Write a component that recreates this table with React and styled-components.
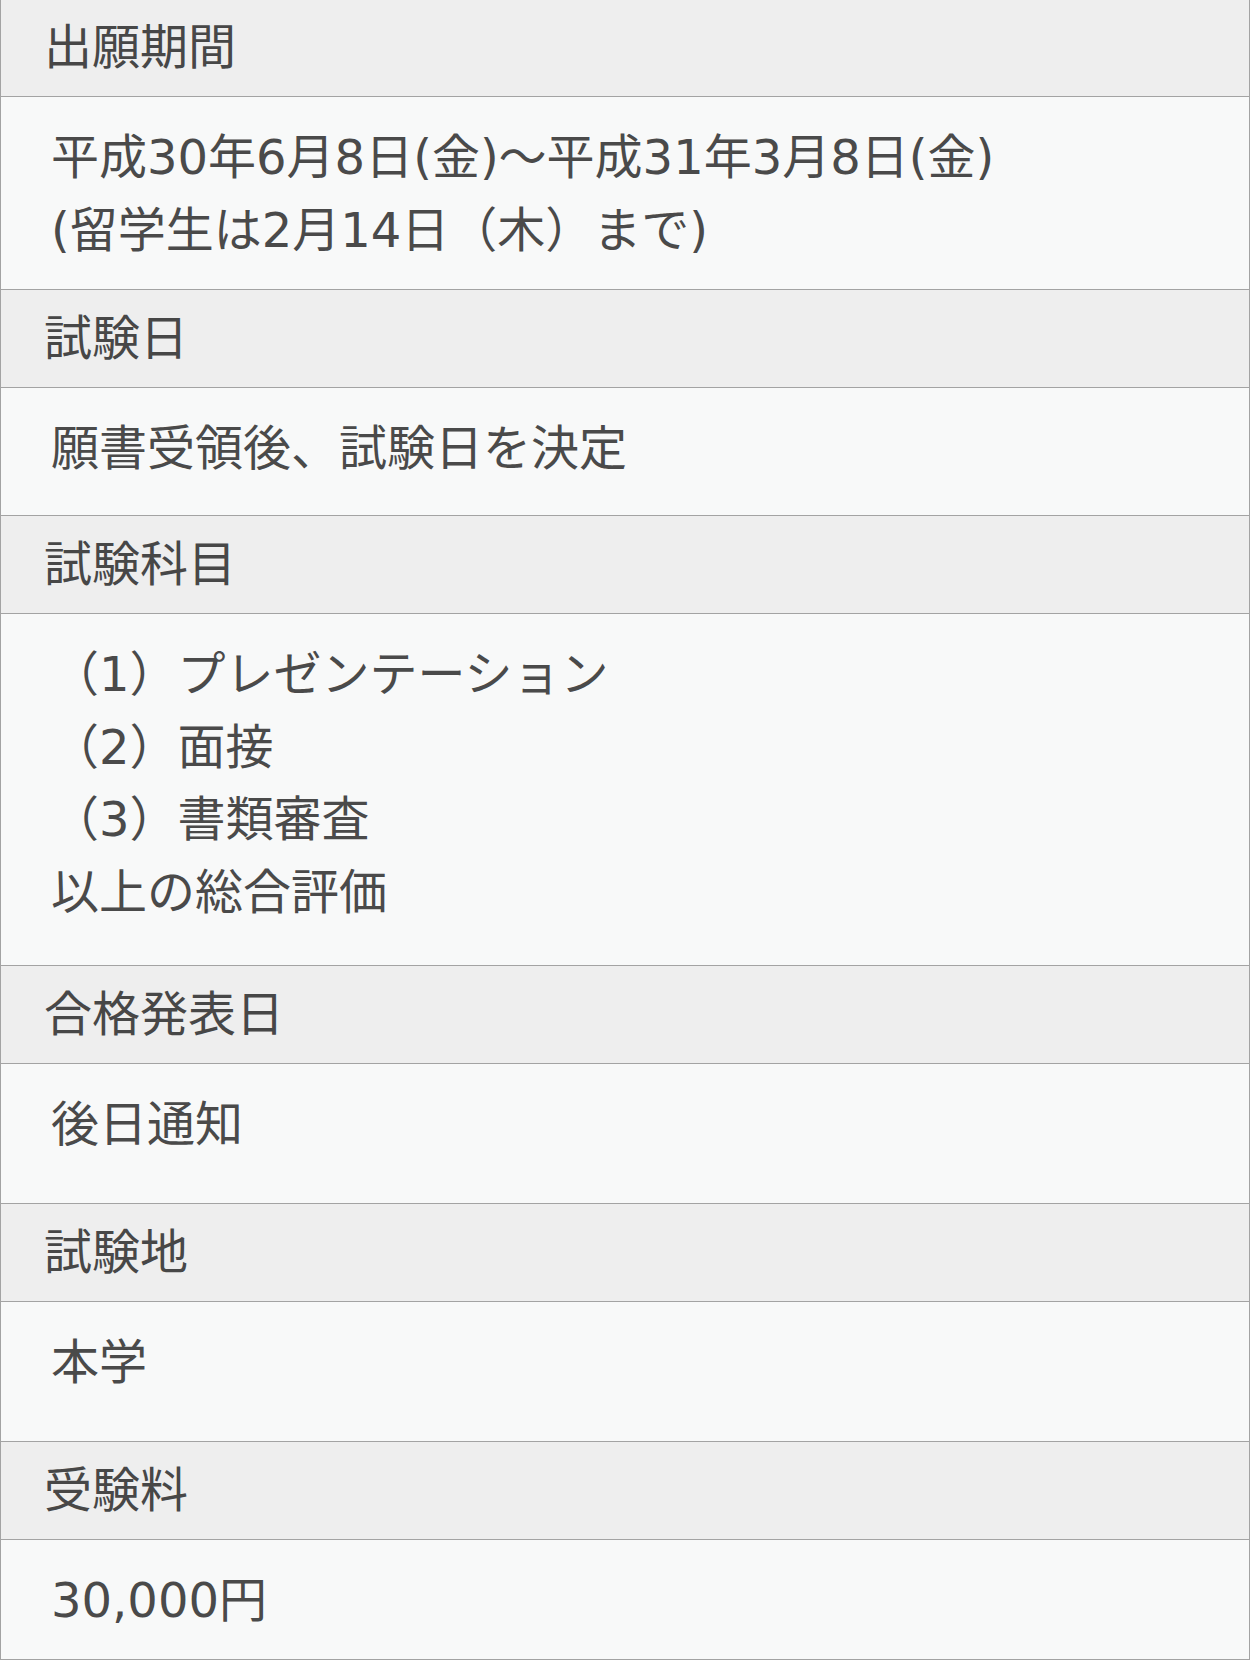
import React from "react";
import styled, { createGlobalStyle } from "styled-components";

const Global = createGlobalStyle`
  html, body {
    margin: 0;
    padding: 0;
    background: #ffffff;
  }
  body {
    font-family: "DejaVu Sans", "Noto Sans CJK JP", sans-serif;
    color: #4a4a4a;
  }
`;

const Table = styled.dl`
  margin: -2px 0 0 0;
  border: 1px solid #a3a3a3;
  border-bottom: none;
  width: 100%;
  box-sizing: border-box;
  display: flex;
  flex-direction: column;
`;

const Head = styled.dt`
  margin: 0;
  padding: 12px 20px 12.5px 43px;
  background: #eeeeee;
  border-bottom: 1px solid #a3a3a3;
  font-size: 48px;
  line-height: 72.5px;
  color: #474747;
`;

const Body = styled.dd`
  margin: 0;
  padding: 24px 20px ${(p) => p.$bottom}px 50px;
  background: #f8f9f9;
  border-bottom: 1px solid #a3a3a3;
  font-size: 48px;
  line-height: 72.5px;
  color: #4a4a4a;
`;

const Line = styled.div`
  white-space: nowrap;
`;

const rows = [
  {
    head: "出願期間",
    lines: [
      "平成30年6月8日(金)～平成31年3月8日(金)",
      "(留学生は2月14日（木）まで)",
    ],
    bottom: 23,
  },
  { head: "試験日", lines: ["願書受領後、試験日を決定"], bottom: 30.5 },
  {
    head: "試験科目",
    lines: ["（1）プレゼンテーション", "（2）面接", "（3）書類審査", "以上の総合評価"],
    bottom: 37,
  },
  { head: "合格発表日", lines: ["後日通知"], bottom: 42.5 },
  { head: "試験地", lines: ["本学"], bottom: 42.5 },
  { head: "受験料", lines: ["30,000円"], bottom: 22.5 },
];

export default function App() {
  return (
    <>
      <Global />
      <Table>
        {rows.map((r) => (
          <React.Fragment key={r.head}>
            <Head>{r.head}</Head>
            <Body $bottom={r.bottom}>
              {r.lines.map((l) => (
                <Line key={l}>{l}</Line>
              ))}
            </Body>
          </React.Fragment>
        ))}
      </Table>
    </>
  );
}
